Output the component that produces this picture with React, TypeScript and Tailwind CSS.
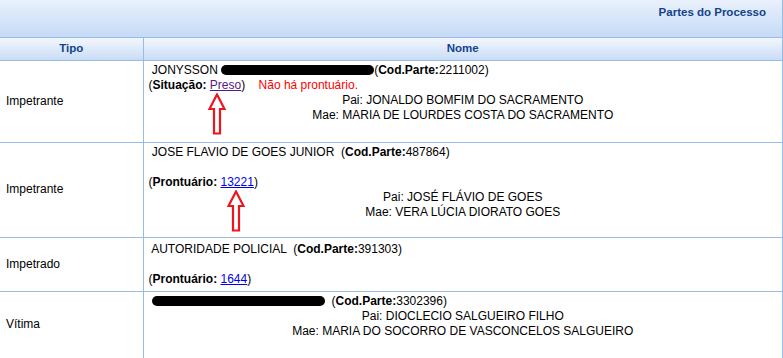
import React from 'react';

const Redacted = ({ width }: { width: string }) => (
  <span className={`inline-block ${width} h-[10px] bg-black rounded-full align-[-1px]`} />
);

const UpArrow = ({ className }: { className: string }) => (
  <svg className={`absolute ${className}`} width="18" height="42" viewBox="0 0 18 42">
    <polygon
      points="9,1.5 16.5,16 12,16 12,40.5 6,40.5 6,16 1.5,16"
      fill="white"
      stroke="#f0141e"
      strokeWidth="2.2"
      strokeLinejoin="miter"
    />
  </svg>
);

const Bold = ({ children }: { children: React.ReactNode }) => <b className="font-bold">{children}</b>;

const App = () => {
  return (
    <div className="relative w-[783px] h-[358px] overflow-hidden bg-white text-[12px] leading-[15px] text-black font-['Liberation_Sans',Arial,sans-serif]">
      {/* Titulo */}
      <div className="h-[38px] flex justify-end pr-[16px] pt-[5px] border-b border-r border-[#99bbe8] bg-linear-to-b from-[#e9f1fc] to-[#c5daf6]">
        <span className="font-bold text-[11.5px] text-[#15428b]">Partes do Processo</span>
      </div>

      <table className="w-[783px] border-collapse table-fixed">
        <thead>
          <tr className="h-[22px]">
            <th className="w-[143px] p-0 font-bold text-[11.5px] text-[#15428b] text-center border-b border-r border-[#99bbe8] bg-linear-to-b from-[#f3f7fd] to-[#c9dcf6]">
              Tipo
            </th>
            <th className="p-0 font-bold text-[11.5px] text-[#15428b] text-center border-b border-r border-[#99bbe8] bg-linear-to-b from-[#f3f7fd] to-[#c9dcf6]">
              Nome
            </th>
          </tr>
        </thead>
        <tbody>
          {/* Impetrante 1 */}
          <tr className="h-[82px]">
            <td className="pl-[6px] align-middle border-b border-r border-[#99bbe8]">Impetrante</td>
            <td className="px-[5px] pt-[2px] align-top border-b border-r border-[#99bbe8]">
              <div className="whitespace-pre">
                {' JONYSSON '}<Redacted width="w-[153px]" />
                (<Bold>Cod.Parte:</Bold>2211002)
              </div>
              <div className="whitespace-pre">
                (<Bold>Situação:</Bold> <a href="#" className="text-[#551a8b] underline">Preso</a>){'    '}
                <span className="text-[#ff0000]">Não há prontuário.</span>
              </div>
              <div className="text-center">Pai: JONALDO BOMFIM DO SACRAMENTO</div>
              <div className="text-center">Mae: MARIA DE LOURDES COSTA DO SACRAMENTO</div>
            </td>
          </tr>

          {/* Impetrante 2 */}
          <tr className="h-[95px]">
            <td className="pl-[6px] align-middle border-b border-r border-[#99bbe8]">Impetrante</td>
            <td className="px-[5px] pt-[2px] align-top border-b border-r border-[#99bbe8]">
              <div className="whitespace-pre">
                {' JOSE FLAVIO DE GOES JUNIOR  '}(<Bold>Cod.Parte:</Bold>487864)
              </div>
              <div className="h-[15px]" />
              <div className="whitespace-pre">
                (<Bold>Prontuário:</Bold> <a href="#" className="text-[#0000ee] underline">13221</a>)
              </div>
              <div className="text-center">Pai: JOSÉ FLÁVIO DE GOES</div>
              <div className="text-center">Mae: VERA LÚCIA DIORATO GOES</div>
            </td>
          </tr>

          {/* Impetrado */}
          <tr className="h-[54px]">
            <td className="pl-[6px] align-middle border-b border-r border-[#99bbe8]">Impetrado</td>
            <td className="px-[5px] pt-[4px] align-top border-b border-r border-[#99bbe8]">
              <div className="whitespace-pre">
                {' AUTORIDADE POLICIAL  '}(<Bold>Cod.Parte:</Bold>391303)
              </div>
              <div className="h-[15px]" />
              <div className="whitespace-pre">
                (<Bold>Prontuário:</Bold> <a href="#" className="text-[#0000ee] underline">1644</a>)
              </div>
            </td>
          </tr>

          {/* Vitima */}
          <tr className="h-[67px]">
            <td className="pl-[6px] align-middle border-b border-r border-[#99bbe8]">Vítima</td>
            <td className="px-[5px] pt-[2px] align-top border-b border-r border-[#99bbe8]">
              <div className="whitespace-pre">
                {' '}<Redacted width="w-[173px]" />{'  '}(<Bold>Cod.Parte:</Bold>3302396)
              </div>
              <div className="text-center">Pai: DIOCLECIO SALGUEIRO FILHO</div>
              <div className="text-center">Mae: MARIA DO SOCORRO DE VASCONCELOS SALGUEIRO</div>
            </td>
          </tr>
        </tbody>
      </table>

      {/* setas de destaque */}
      <UpArrow className="left-[208px] top-[93px]" />
      <UpArrow className="left-[227px] top-[190px]" />
    </div>
  );
};

export default App;
